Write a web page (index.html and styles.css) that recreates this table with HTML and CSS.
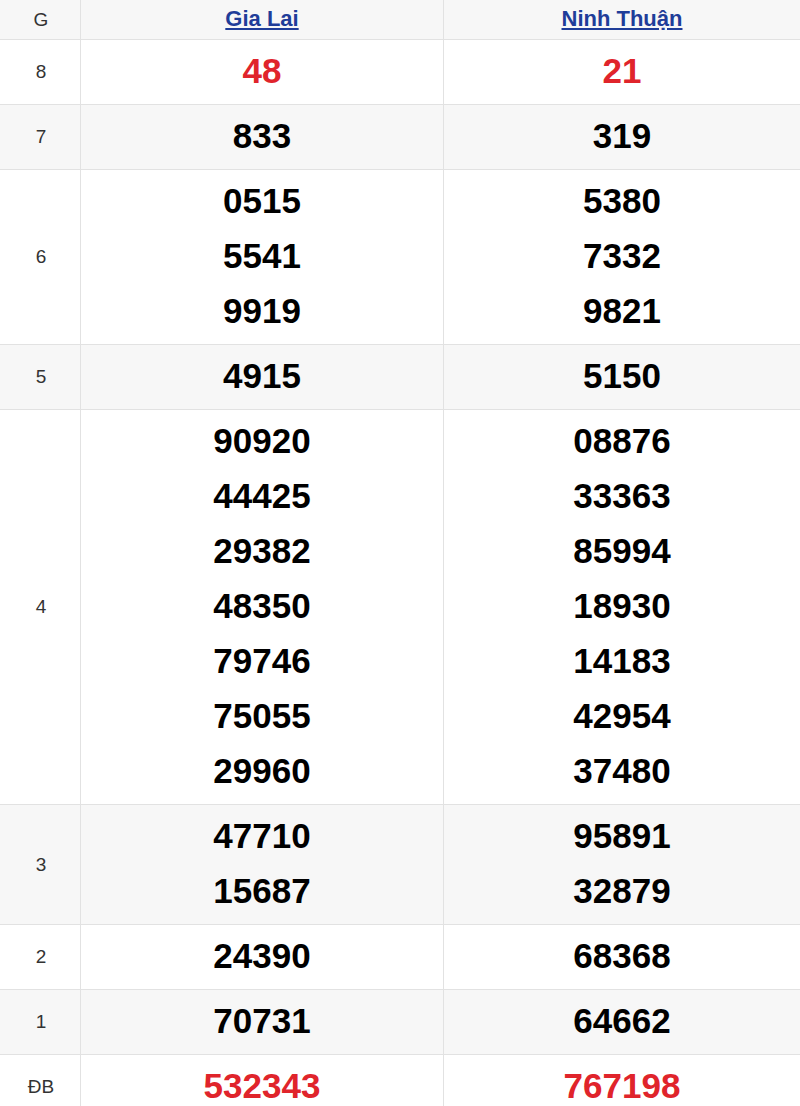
FILE: index.html
```html
<!DOCTYPE html>
<html lang="vi">
<head>
<meta charset="utf-8">
<link rel="stylesheet" href="styles.css">
</head>
<body>
<div class="kq">
  <div class="row head">
    <div class="lbl">G</div>
    <div class="cell"><a class="prov" href="#">Gia Lai</a></div>
    <div class="cell"><a class="prov" href="#">Ninh Thuận</a></div>
  </div>
  <div class="row">
    <div class="lbl">8</div>
    <div class="cell"><div class="num red">48</div></div>
    <div class="cell"><div class="num red">21</div></div>
  </div>
  <div class="row alt">
    <div class="lbl">7</div>
    <div class="cell"><div class="num">833</div></div>
    <div class="cell"><div class="num">319</div></div>
  </div>
  <div class="row">
    <div class="lbl">6</div>
    <div class="cell"><div class="num">0515</div><div class="num">5541</div><div class="num">9919</div></div>
    <div class="cell"><div class="num">5380</div><div class="num">7332</div><div class="num">9821</div></div>
  </div>
  <div class="row alt">
    <div class="lbl">5</div>
    <div class="cell"><div class="num">4915</div></div>
    <div class="cell"><div class="num">5150</div></div>
  </div>
  <div class="row">
    <div class="lbl">4</div>
    <div class="cell"><div class="num">90920</div><div class="num">44425</div><div class="num">29382</div><div class="num">48350</div><div class="num">79746</div><div class="num">75055</div><div class="num">29960</div></div>
    <div class="cell"><div class="num">08876</div><div class="num">33363</div><div class="num">85994</div><div class="num">18930</div><div class="num">14183</div><div class="num">42954</div><div class="num">37480</div></div>
  </div>
  <div class="row alt">
    <div class="lbl">3</div>
    <div class="cell"><div class="num">47710</div><div class="num">15687</div></div>
    <div class="cell"><div class="num">95891</div><div class="num">32879</div></div>
  </div>
  <div class="row">
    <div class="lbl">2</div>
    <div class="cell"><div class="num">24390</div></div>
    <div class="cell"><div class="num">68368</div></div>
  </div>
  <div class="row alt">
    <div class="lbl">1</div>
    <div class="cell"><div class="num">70731</div></div>
    <div class="cell"><div class="num">64662</div></div>
  </div>
  <div class="row">
    <div class="lbl">ĐB</div>
    <div class="cell"><div class="num red">532343</div></div>
    <div class="cell"><div class="num red">767198</div></div>
  </div>
</div>
</body>
</html>
```
FILE: styles.css
```css
html, body {
  margin: 0;
  padding: 0;
  background: #fff;
  font-family: Arial, "Liberation Sans", sans-serif;
}
.kq {
  width: 800px;
}
.row {
  display: grid;
  grid-template-columns: 81px 362px 1fr;
  border-bottom: 1px solid #e2e2e2;
  background: #fff;
}
.row.alt {
  background: #f7f7f7;
}
.row.head {
  background: #f7f7f7;
  height: 39px;
}
.lbl {
  display: flex;
  align-items: center;
  justify-content: center;
  border-right: 1px solid #e2e2e2;
  font-size: 19px;
  color: #333;
  padding-left: 2px;
}
.cell {
  display: flex;
  flex-direction: column;
  align-items: center;
  justify-content: center;
  padding: 3px 0 6px;
}
.cell + .cell {
  border-left: 1px solid #e2e2e2;
}
.head .cell {
  padding: 0 0 2px;
}
.prov {
  color: #1f3d99;
  font-weight: bold;
  font-size: 22px;
  text-decoration: underline;
}
.num {
  font-size: 35px;
  font-weight: bold;
  line-height: 55px;
  color: #000;
}
.num.red {
  color: #e0242b;
}
```
